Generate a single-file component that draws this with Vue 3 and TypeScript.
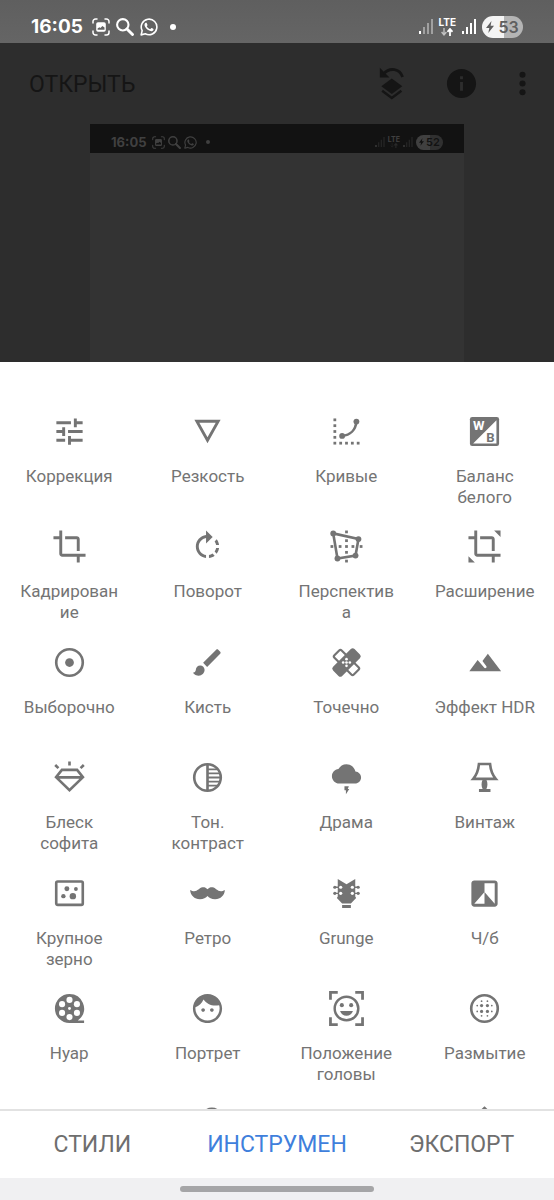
<script setup lang="ts">
interface Tool {
  label: string
  art: string
}

const cropPath =
  '<path d="M17 15h2V7c0-1.1-.9-2-2-2H9v2h8v8zM7 17V1H5v4H1v2h4v10c0 1.1.9 2 2 2h10v4h2v-4h4v-2H7z"/>'

const dots = (points: number[][]): string =>
  points.map(([x, y, r]) => `<circle cx="${x}" cy="${y}" r="${r}"/>`).join('')

const squares = (points: number[][]): string =>
  points.map(([x, y]) => `<rect x="${x - 0.95}" y="${y - 0.95}" width="1.9" height="1.9"/>`).join('')

const stroked = (d: string, width: number): string =>
  `<path d="${d}" fill="none" stroke="currentColor" stroke-width="${width}"/>`

const ring = '<circle cx="12" cy="12" r="9.1" fill="none" stroke="currentColor" stroke-width="1.8"/>'

const tools: Tool[] = [
  {
    label: 'Коррекция',
    art: '<path d="M3 17v2h6v-2H3zM3 5v2h10V5H3zm10 16v-2h8v-2h-8v-2h-2v6h2zM7 9v2H3v2h4v2h2V9H7zm14 4v-2H11v2h10zm-6-4h2V7h4V5h-4V3h-2v6z"/>',
  },
  { label: 'Резкость', art: '<path d="M3 4l9 16 9-16H3zm3.38 2h11.25L12 16 6.38 6z"/>' },
  {
    label: 'Кривые',
    art:
      squares([[4, 4], [4, 8], [4, 12], [4, 16], [4, 20], [8, 20], [12, 20], [16, 20], [20, 20]]) +
      stroked('M9 15C14.5 14.6 18.2 11 18.8 5.2', 1.8) +
      dots([[9, 15, 2], [18.8, 5.2, 2]]),
  },
  {
    label: 'Баланс\nбелого',
    art:
      '<rect x="2" y="2" width="20" height="20" rx="1.6"/>' +
      '<path d="M4.2 20.2L20.2 4.2v16z" fill="#fff"/>' +
      '<text x="8" y="11" font-size="9" font-weight="700" text-anchor="middle" fill="#fff">W</text>' +
      '<text x="16" y="19.2" font-size="9" font-weight="700" text-anchor="middle">B</text>',
  },
  { label: 'Кадрирован\nие', art: cropPath },
  {
    label: 'Поворот',
    art: '<path d="M15.55 5.55L11 1v3.07C7.06 4.56 4 7.92 4 12s3.05 7.44 7 7.93v-2.02c-2.84-.48-5-2.94-5-5.91s2.16-5.43 5-5.91V10l4.55-4.45zM19.93 11c-.17-1.39-.72-2.73-1.62-3.89l-1.42 1.42c.54.75.88 1.6 1.02 2.47h2.02zM13 17.9v2.02c1.39-.17 2.74-.71 3.9-1.61l-1.44-1.44c-.75.54-1.59.89-2.46 1.03zm3.89-2.42l1.42 1.41c.9-1.16 1.45-2.5 1.62-3.89h-2.02c-.14.87-.48 1.72-1.02 2.48z"/>',
  },
  {
    label: 'Перспектив\nа',
    art:
      stroked('M2.9 3L20.2 6.9 18.2 18.2 5.8 20.2z', 1.8) +
      dots([[2.9, 3, 2], [20.2, 6.9, 2], [18.2, 18.2, 2], [5.8, 20.2, 2]]) +
      squares([[2, 12], [7.6, 12], [12, 12], [16.4, 12], [22, 12], [12, 2], [12, 8], [12, 16], [12, 22]]),
  },
  { label: 'Расширение', art: cropPath + '<path d="M18.6 1H23v4.4zM1 18.6V23h4.4z"/>' },
  { label: 'Выборочно', art: ring + dots([[12, 12, 3]]) },
  {
    label: 'Кисть',
    art: '<path d="M7 14c-1.66 0-3 1.34-3 3 0 1.31-1.16 2-2 2 .92 1.22 2.49 2 4 2 2.21 0 4-1.79 4-4 0-1.66-1.34-3-3-3zm13.71-9.37l-1.34-1.34c-.39-.39-1.02-.39-1.41 0L9 12.25 11.75 15l8.96-8.96c.39-.39.39-1.02 0-1.41z"/>',
  },
  {
    label: 'Точечно',
    art:
      '<rect x="2.6" y="8.5" width="18.8" height="7" rx="1.2" transform="rotate(45 12 12)" fill="none" stroke="currentColor" stroke-width="1.5"/>' +
      '<rect x="1.6" y="7.6" width="20.8" height="8.8" rx="1.8" transform="rotate(-45 12 12)"/>' +
      '<g fill="#fff">' +
      dots([[9.7, 12, 0.9], [14.3, 12, 0.9], [12, 9.7, 0.9], [12, 14.3, 0.9], [12, 12, 0.9]]) +
      '</g>',
  },
  { label: 'Эффект HDR', art: '<path d="M14.3 6l-3.7 4.9 2.7 3.6c.5 1-.9 1.9-1.6 1L7.3 10.2 1.6 18h21.8z"/>' },
  {
    label: 'Блеск\nсофита',
    art: stroked('M6.8 6.8h10.4l4 5L12 20.7 2.8 11.8zM3 11.9h18M12 1v2.8M2.2 3.4l2.2 2.2M21.8 3.4l-2.2 2.2', 1.8),
  },
  {
    label: 'Тон.\nконтраст',
    art: ring + stroked('M12 3v18', 1.8) + stroked('M12 6.4h7M12 9.2h8.5M12 12h9M12 14.8h8.5M12 17.6h7', 1.3),
  },
  {
    label: 'Драма',
    art:
      '<path transform="translate(2 -.5) scale(.833)" d="M19.35 10.04C18.67 6.59 15.64 4 12 4 9.11 4 6.6 5.64 5.35 8.04 2.34 8.36 0 10.91 0 14c0 3.31 2.69 6 6 6h13c2.76 0 5-2.24 5-5 0-2.64-2.05-4.78-4.65-4.96z"/>' +
      '<path d="M10.6 18h3l-.7 1.8h1l-2.3 3.7v-2.7h-1z"/>',
  },
  {
    label: 'Винтаж',
    art:
      stroked('M8.2 2.7h7.6C16.2 7 17.6 10.5 19.7 12.9H4.3C6.4 10.5 7.8 7 8.2 2.7z', 1.8) +
      '<path d="M10.7 13.5h2.6c1 2 .9 4.4 0 6.4h2.8v2H8.2v-2h2.5c-.9-2-1-4.4 0-6.4z"/>',
  },
  {
    label: 'Крупное\nзерно',
    art:
      '<rect x="2.9" y="3.8" width="18.2" height="16" rx="1" fill="none" stroke="currentColor" stroke-width="1.8"/>' +
      dots([[10.2, 8.8, 1.7], [16.4, 8.9, 1.3], [7.8, 13.8, 1.5], [14.3, 13.8, 2.2]]),
  },
  {
    label: 'Ретро',
    art: '<path d="M12 9.1C11 7.9 9.8 7.5 8.5 7.7 5.8 8.1 4.6 12.2.1 9.6.3 13.3 3 15.9 6.8 15.9c2.4 0 4.2-.8 5.2-2.2 1 1.4 2.8 2.2 5.2 2.2 3.8 0 6.5-2.6 6.7-6.3-4.5 2.6-5.7-1.5-8.4-1.9-1.3-.2-2.5.2-3.5 1.4z"/>',
  },
  {
    label: 'Grunge',
    art:
      '<path d="M6 2l6 3.7L18 2v12l.6 1-3.6 3.9H9L5.4 15l.6-1zM9 19.9h6v2H9z"/>' +
      stroked('M3.8 7.7h16.4M3.8 11.9h16.4', 0.9) +
      dots([[4, 7.7, 1.1], [20, 7.7, 1.1], [4, 11.9, 1.1], [20, 11.9, 1.1]]) +
      '<g fill="#fff">' +
      dots([[8, 7.7, 1.1], [16, 7.7, 1.1], [8, 11.9, 1.1], [16, 11.9, 1.1]]) +
      '</g>',
  },
  {
    label: 'Ч/б',
    art: '<path d="M19 3H5c-1.1 0-2 .9-2 2v14c0 1.1.9 2 2 2h14c1.1 0 2-.9 2-2V5c0-1.1-.9-2-2-2zm0 16l-7-8v8H5l7-8V5h7v14z"/>',
  },
  {
    label: 'Нуар',
    art:
      '<path d="M12 2a10 10 0 0 1 7 17.1l-1.3 1.1H22V22H12a10 10 0 0 1 0-20z"/>' +
      '<g fill="#fff">' +
      dots([[12, 6.1, 2.1], [17.1, 9, 2.1], [17.1, 15, 2.1], [12, 17.9, 2.1], [6.9, 15, 2.1], [6.9, 9, 2.1], [12, 12, 1]]) +
      '</g>',
  },
  {
    label: 'Портрет',
    art: '<path d="M9 11.75c-.69 0-1.25.56-1.25 1.25s.56 1.25 1.25 1.25 1.25-.56 1.25-1.25-.56-1.25-1.25-1.25zm6 0c-.69 0-1.25.56-1.25 1.25s.56 1.25 1.25 1.25 1.25-.56 1.25-1.25-.56-1.25-1.25-1.25zM12 2C6.48 2 2 6.48 2 12s4.48 10 10 10 10-4.48 10-10S17.52 2 12 2zm0 18.3c-4.5 0-8.3-3.7-8.3-8.3 0-.29.02-.58.05-.86 2.36-1.05 4.53-2.98 5.51-5.37C11.07 8.33 14.05 10 17.42 10c.78 0 1.53-.09 2.55-.26.21.71.33 1.47.33 2.26 0 4.6-3.7 8.3-8.3 8.3z"/>',
  },
  {
    label: 'Положение\nголовы',
    art:
      stroked('M1 6V1h5M18 1h5v5M23 18v5h-5M6 23H1v-5', 1.9) +
      '<circle cx="12" cy="12" r="8.1" fill="none" stroke="currentColor" stroke-width="1.7"/>' +
      dots([[8.8, 9.7, 1.4], [15.2, 9.7, 1.4]]) +
      '<path d="M7.6 13.7h8.8c-.7 2-2.3 3.3-4.4 3.3s-3.7-1.3-4.4-3.3z"/>',
  },
  {
    label: 'Размытие',
    art:
      ring +
      dots([
        [10, 10, 1.1], [14, 10, 1.1], [10, 14, 1.1], [14, 14, 1.1],
        [7, 10, 0.6], [17, 10, 0.6], [7, 14, 0.6], [17, 14, 0.6],
        [10, 7, 0.6], [14, 7, 0.6], [10, 17, 0.6], [14, 17, 0.6],
      ]),
  },
  { label: '', art: '' },
  { label: '', art: dots([[15, 8, 7.6]]) },
  { label: '', art: '' },
  { label: '', art: '<path d="M12-.6l6 6H6z"/>' },
]

const tabs = [
  { label: 'СТИЛИ', active: false },
  { label: 'ИНСТРУМЕН', active: true },
  { label: 'ЭКСПОРТ', active: false },
]
</script>

<template>
  <svg class="sprite" aria-hidden="true">
    <symbol id="capture" viewBox="0 0 18 18">
      <path d="M1 5V3.5A2.5 2.5 0 0 1 3.5 1H5M13 1h1.5A2.5 2.5 0 0 1 17 3.5V5M17 13v1.5a2.5 2.5 0 0 1-2.5 2.5H13M5 17H3.5A2.5 2.5 0 0 1 1 14.5V13" fill="none" stroke="currentColor" stroke-width="1.5" stroke-linecap="round" />
      <path fill-rule="evenodd" d="M6 4.2h6a1.800 1.800 0 0 1 1.8 1.8v6a1.800 1.800 0 0 1-1.8 1.8H6A1.800 1.800 0 0 1 4.200 12V6A1.800 1.800 0 0 1 6 4.200zM5.600 11.700h6.900V9.600L10.400 8l-2 2-1-.8-1.800 1.300z" />
    </symbol>
    <symbol id="search" viewBox="0 0 18 18">
      <circle cx="6.8" cy="6.8" r="5.7" fill="none" stroke="currentColor" stroke-width="2.1" />
      <path d="M11 11l5.500 5.500" fill="none" stroke="currentColor" stroke-width="2.900" stroke-linecap="round" />
    </symbol>
    <symbol id="chat" viewBox="0 0 24 24">
      <path d="M17.472 14.382c-.297-.149-1.758-.867-2.030-.967-.273-.099-.471-.148-.670.150-.197.297-.767.966-.940 1.164-.173.199-.347.223-.644.075-.297-.150-1.255-.463-2.390-1.475-.883-.788-1.480-1.761-1.653-2.059-.173-.297-.018-.458.130-.606.134-.133.298-.347.446-.520.149-.174.198-.298.298-.497.099-.198.050-.371-.025-.520-.075-.149-.669-1.612-.916-2.207-.242-.579-.487-.500-.669-.510-.173-.008-.371-.010-.570-.010-.198 0-.520.074-.792.372-.272.297-1.040 1.016-1.040 2.479 0 1.462 1.065 2.875 1.213 3.074.149.198 2.096 3.200 5.077 4.487.709.306 1.262.489 1.694.625.712.227 1.360.195 1.871.118.571-.085 1.758-.719 2.006-1.413.248-.694.248-1.289.173-1.413-.074-.124-.272-.198-.570-.347" />
      <path d="M1.500 22.500l1.400-5.700A10.400 10.400 0 1 1 7 21z" fill="none" stroke="currentColor" stroke-width="2.100" stroke-linejoin="round" />
    </symbol>
    <symbol id="signal-weak" viewBox="0 0 14 15">
      <path d="M0 12h2v3H0z" />
      <path d="M4 8h2v7H4zM8 4h2v11H8zM12 0h2v15h-2z" opacity=".4" />
    </symbol>
    <symbol id="signal-full" viewBox="0 0 14 15">
      <path d="M0 12h2v3H0zM4 8h2v7H4zM8 4h2v11H8zM12 0h2v15h-2z" />
    </symbol>
    <symbol id="traffic" viewBox="0 0 12 8">
      <path d="M3 0v6.5M.6 4L3 6.800 5.400 4" fill="none" stroke="currentColor" stroke-width="1.400" opacity=".6" />
      <path d="M9 8V1.200M6.500 3.800L9 1l2.500 2.800" fill="none" stroke="currentColor" stroke-width="1.800" />
    </symbol>
    <symbol id="bolt" viewBox="0 0 8 12">
      <path d="M5.500 0L0 7h3.300l-1 5L8 4.800H4.600z" />
    </symbol>
  </svg>

  <div class="phone">
    <div class="status">
      <span class="time">16:05</span>
      <svg class="glyph"><use href="#capture" /></svg>
      <svg class="glyph"><use href="#search" /></svg>
      <svg class="glyph"><use href="#chat" /></svg>
      <i class="dot"></i>
      <span class="spacer"></span>
      <svg class="signal"><use href="#signal-weak" /></svg>
      <span class="lte">LTE<svg class="traffic"><use href="#traffic" /></svg></span>
      <svg class="signal"><use href="#signal-full" /></svg>
      <span class="battery"><svg class="bolt"><use href="#bolt" /></svg>53</span>
    </div>

    <section class="editor">
      <header class="bar">
        <button type="button" class="open">ОТКРЫТЬ</button>
        <button type="button" class="action" aria-label="Изменить">
          <svg class="icon" viewBox="0 0 24 24">
            <path d="M4 1.200v6.600h6.600z" />
            <path d="M6.400 5.400C11 .6 17.600 1.800 19.600 7.500" fill="none" stroke="currentColor" stroke-width="1.900" />
            <path d="M12.200 8.500l7.200 5.400-7.200 5.300L5 13.900z" />
            <path d="M5.600 17l6.600 4.900 6.600-4.900" fill="none" stroke="currentColor" stroke-width="1.700" />
          </svg>
        </button>
        <button type="button" class="action" aria-label="Информация">
          <svg class="icon" viewBox="0 0 24 24">
            <path d="M12 2C6.480 2 2 6.480 2 12s4.480 10 10 10 10-4.480 10-10S17.520 2 12 2zm1 15h-2v-6h2v6zm0-8h-2V7h2v2z" />
          </svg>
        </button>
        <button type="button" class="action more" aria-label="Ещё">
          <svg class="icon" viewBox="0 0 24 24">
            <circle cx="12" cy="6" r="2.100" /><circle cx="12" cy="12" r="2.100" /><circle cx="12" cy="18" r="2.100" />
          </svg>
        </button>
      </header>
      <div class="photo">
        <div class="status small">
          <span class="time">16:05</span>
          <svg class="glyph"><use href="#capture" /></svg>
          <svg class="glyph"><use href="#search" /></svg>
          <svg class="glyph"><use href="#chat" /></svg>
          <i class="dot"></i>
          <span class="spacer"></span>
          <svg class="signal"><use href="#signal-weak" /></svg>
          <span class="lte">LTE<svg class="traffic"><use href="#traffic" /></svg></span>
          <svg class="signal"><use href="#signal-weak" /></svg>
          <span class="battery"><svg class="bolt"><use href="#bolt" /></svg>52</span>
        </div>
      </div>
    </section>

    <main class="sheet">
      <button v-for="(tool, i) in tools" :key="i" type="button" class="tool">
        <svg class="icon" viewBox="0 0 24 24" aria-hidden="true" v-html="tool.art"></svg>
        <span class="label">{{ tool.label }}</span>
      </button>
    </main>

    <nav class="tabs">
      <button v-for="tab in tabs" :key="tab.label" type="button" class="tab" :class="{ active: tab.active }">
        {{ tab.label }}
      </button>
    </nav>
    <div class="gesture"><i class="pill"></i></div>
  </div>
</template>

<style>
body {
  margin: 0;
}
</style>

<style scoped>
.sprite {
  position: absolute;
  width: 0;
  height: 0;
}

.phone {
  display: flex;
  flex-direction: column;
  height: 100vh;
  overflow: hidden;
  background: #fff;
  font-family: Roboto, "Noto Sans", sans-serif;
}

button {
  margin: 0;
  padding: 0;
  border: 0;
  background: none;
  color: inherit;
  font: inherit;
  cursor: pointer;
}

svg {
  display: block;
  flex: none;
  fill: currentColor;
}

.icon {
  width: 35px;
  height: 35px;
  overflow: visible;
}

.status {
  display: flex;
  flex: none;
  align-items: center;
  gap: 6px;
  box-sizing: border-box;
  height: 43px;
  padding: 10px 31px 0;
  background: linear-gradient(#5f5f5f, #656565);
  color: #fff;
  font-family: Inter, Roboto, sans-serif;
}

.time {
  margin-right: 3px;
  font-size: 19px;
  font-weight: 700;
  line-height: 24px;
}

.glyph {
  width: 18px;
  height: 18px;
}

.dot {
  width: 6px;
  height: 6px;
  margin-left: 6px;
  border-radius: 50%;
  background: currentColor;
}

.spacer {
  flex: 1;
}

.signal {
  width: 14px;
  height: 15px;
}

.lte {
  display: flex;
  flex-direction: column;
  align-items: center;
  gap: 1px;
  font-size: 10px;
  font-weight: 700;
  line-height: 9px;
}

.traffic {
  width: 12px;
  height: 8px;
}

.battery {
  display: flex;
  align-items: center;
  justify-content: center;
  gap: 4px;
  width: 41px;
  height: 22px;
  border-radius: 11px;
  background: linear-gradient(90deg, #f4f4f4 53%, #b4b4b4 53%);
  color: #5f5f5f;
  font-size: 16px;
  font-weight: 600;
}

.bolt {
  width: 8px;
  height: 12px;
}

.editor {
  display: flex;
  flex: none;
  flex-direction: column;
  height: 319px;
  background: #2d2d2d;
  color: #151515;
}

.bar {
  display: flex;
  align-items: center;
  height: 81px;
  padding: 0 14px 0 29px;
}

.open {
  margin-right: auto;
  padding-top: 2px;
  font-size: 23px;
}

.action {
  margin-right: 35px;
}

.more {
  width: 35px;
  margin: 0 0 0 -9px;
}

.photo {
  flex: 1;
  margin: 0 90px;
  background: #333;
}

.small {
  gap: 3px;
  height: 29px;
  padding: 7px 21px 0;
  background: #121212;
  color: #404040;
}

.small .time {
  font-size: 13px;
  line-height: 16px;
}

.small .glyph {
  width: 13px;
  height: 13px;
}

.small .dot {
  width: 4px;
  height: 4px;
}

.small .signal {
  width: 10px;
  height: 10px;
}

.small .lte {
  gap: 0;
  font-size: 7px;
  line-height: 7px;
}

.small .traffic {
  width: 8px;
  height: 5px;
  opacity: 0.5;
}

.small .battery {
  gap: 2px;
  width: 27px;
  height: 15px;
  background: linear-gradient(90deg, #404040 52%, #303030 52%);
  color: #121212;
  font-size: 11px;
}

.small .bolt {
  width: 5px;
  height: 8px;
}

.sheet {
  display: grid;
  flex: 1;
  grid-template-columns: repeat(4, minmax(0, 1fr));
  grid-template-rows: repeat(3, 115px 116px) 116px;
  min-height: 0;
  padding-top: 52px;
  overflow: hidden;
  background: #fff;
  color: #747474;
}

.tool {
  display: flex;
  flex-direction: column;
  align-items: center;
  gap: 17px;
}

.label {
  font-size: 17px;
  line-height: 21px;
  text-align: center;
  white-space: pre-line;
}

.tabs {
  display: grid;
  flex: none;
  grid-template-columns: repeat(3, minmax(0, 1fr));
  height: 67px;
  border-top: 2px solid #e2e2e2;
  background: #fff;
  color: #6e6e6e;
}

.tab {
  font-size: 23px;
}

.active {
  color: #3f7fdc;
}

.gesture {
  display: flex;
  flex: none;
  align-items: center;
  justify-content: center;
  height: 22px;
  background: #f0f0f2;
}

.pill {
  width: 35%;
  height: 6px;
  border-radius: 3px;
  background: #a5a5a7;
}
</style>
